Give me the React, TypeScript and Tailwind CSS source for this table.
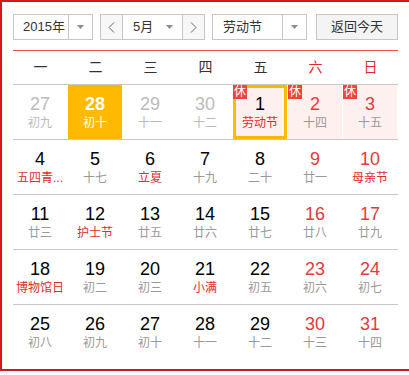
type Day = {
  d: number;
  lunar: string;
  dim?: boolean;
  fest?: boolean;
  rest?: boolean;
  sel?: boolean;
  today?: boolean;
};

const weekdays = ["一", "二", "三", "四", "五", "六", "日"];

const rows: Day[][] = [
  [
    { d: 27, lunar: "初九", dim: true },
    { d: 28, lunar: "初十", sel: true },
    { d: 29, lunar: "十一", dim: true },
    { d: 30, lunar: "十二", dim: true },
    { d: 1, lunar: "劳动节", fest: true, rest: true, today: true },
    { d: 2, lunar: "十四", rest: true },
    { d: 3, lunar: "十五", rest: true },
  ],
  [
    { d: 4, lunar: "五四青...", fest: true },
    { d: 5, lunar: "十七" },
    { d: 6, lunar: "立夏", fest: true },
    { d: 7, lunar: "十九" },
    { d: 8, lunar: "二十" },
    { d: 9, lunar: "廿一" },
    { d: 10, lunar: "母亲节", fest: true },
  ],
  [
    { d: 11, lunar: "廿三" },
    { d: 12, lunar: "护士节", fest: true },
    { d: 13, lunar: "廿五" },
    { d: 14, lunar: "廿六" },
    { d: 15, lunar: "廿七" },
    { d: 16, lunar: "廿八" },
    { d: 17, lunar: "廿九" },
  ],
  [
    { d: 18, lunar: "博物馆日", fest: true },
    { d: 19, lunar: "初二" },
    { d: 20, lunar: "初三" },
    { d: 21, lunar: "小满", fest: true },
    { d: 22, lunar: "初五" },
    { d: 23, lunar: "初六" },
    { d: 24, lunar: "初七" },
  ],
  [
    { d: 25, lunar: "初八" },
    { d: 26, lunar: "初九" },
    { d: 27, lunar: "初十" },
    { d: 28, lunar: "十一" },
    { d: 29, lunar: "十二" },
    { d: 30, lunar: "十三" },
    { d: 31, lunar: "十四" },
  ],
];

function Caret() {
  return (
    <svg width="7" height="4" viewBox="0 0 7 4">
      <polygon points="0,0 7,0 3.5,4" fill="#8c8c8c" />
    </svg>
  );
}

function Chevron({ dir }: { dir: "left" | "right" }) {
  return (
    <svg width="7" height="11" viewBox="0 0 7 11">
      <polyline
        points={dir === "left" ? "6,0.5 1,5.5 6,10.5" : "1,0.5 6,5.5 1,10.5"}
        fill="none"
        stroke="#666"
        strokeWidth="1"
      />
    </svg>
  );
}

function Cell({ day, col }: { day: Day; col: number }) {
  const weekend = col >= 5;
  let numColor = "text-black";
  if (day.dim) numColor = "text-[#bbbbbb]";
  else if (weekend) numColor = "text-[#e43a3a]";
  let lunarColor = "text-[#999999]";
  if (day.dim) lunarColor = "text-[#bbbbbb]";
  else if (day.fest) lunarColor = "text-[#e02b2b]";

  let bg = "";
  if (day.sel) bg = "bg-[#ffba00]";
  else if (day.rest) bg = "bg-[#fff0f0]";

  return (
    <div className={`relative w-[54px] h-[54px] pt-[8px] text-center ${bg}`}>
      <div
        className={`h-[22px] leading-[22px] text-[18px] ${day.sel ? "text-white font-bold" : numColor}`}
        style={{ fontFamily: '"Liberation Sans", Arial, sans-serif' }}
      >
        {day.d}
      </div>
      <div className={`h-[16px] leading-[16px] text-[12px] whitespace-nowrap ${day.sel ? "text-white" : lunarColor}`}>
        {day.lunar}
      </div>
      {day.today && <div className="absolute inset-0 border-[3px] border-[#ffba00]" />}
      {day.rest && (
        <div className="absolute top-0 left-0 w-[14px] h-[14px] bg-[#f2443a] text-white text-[12px] leading-[14px] text-center">
          休
        </div>
      )}
    </div>
  );
}

export default function App() {
  return (
    <div
      className="w-full h-[375px] overflow-hidden bg-white"
      style={{ fontFamily: '"Liberation Sans", "Noto Sans CJK SC", sans-serif' }}
    >
      <div className="w-[411px] border-2 border-[#cc1c1c] pt-3 px-[11px] pb-[10px]">
        {/* toolbar */}
        <div className="flex h-[26px] text-[13px] text-[#333] whitespace-nowrap">
          <div className="flex w-[80px] border border-[#c6c6c6] bg-white">
            <div className="w-[54px] pl-[9px] leading-[24px]">2015年</div>
            <div className="flex-1 border-l border-[#c6c6c6] flex items-center justify-center">
              <Caret />
            </div>
          </div>
          <div className="flex w-[105px] ml-[7px] border border-[#c6c6c6] bg-white">
            <div className="w-[21px] bg-[#f7f7f7] flex items-center justify-center">
              <Chevron dir="left" />
            </div>
            <div className="w-[61px] border-x border-[#c6c6c6] flex items-center justify-between pl-[10px] pr-[9px]">
              <span className="leading-[24px]">5月</span>
              <Caret />
            </div>
            <div className="flex-1 bg-[#f7f7f7] flex items-center justify-center">
              <Chevron dir="right" />
            </div>
          </div>
          <div className="flex w-[95px] ml-[7px] border border-[#c6c6c6] bg-white">
            <div className="w-[69px] pl-[10px] leading-[24px]">劳动节</div>
            <div className="flex-1 border-l border-[#c6c6c6] flex items-center justify-center">
              <Caret />
            </div>
          </div>
          <button className="w-[82px] ml-[9px] border border-[#c6c6c6] bg-[#f4f4f4] text-[13px] text-[#333] leading-[24px]">
            返回今天
          </button>
        </div>

        {/* weekday header */}
        <div className="mt-[10px] border-t border-[#f0503f] grid grid-cols-7 h-[35px] border-b border-b-[#c8c8c8]">
          {weekdays.map((w, i) => (
            <div
              key={w}
              className={`text-center text-[14px] leading-[33px] ${i >= 5 ? "text-[#e02b2b]" : "text-[#333]"}`}
            >
              {w}
            </div>
          ))}
        </div>

        {/* days */}
        {rows.map((row, ri) => (
          <div
            key={ri}
            className={`grid grid-cols-7 ${ri < rows.length - 1 ? "border-b border-[#c8c8c8]" : ""}`}
          >
            {row.map((day, ci) => (
              <Cell key={ci} day={day} col={ci} />
            ))}
          </div>
        ))}
      </div>
    </div>
  );
}
